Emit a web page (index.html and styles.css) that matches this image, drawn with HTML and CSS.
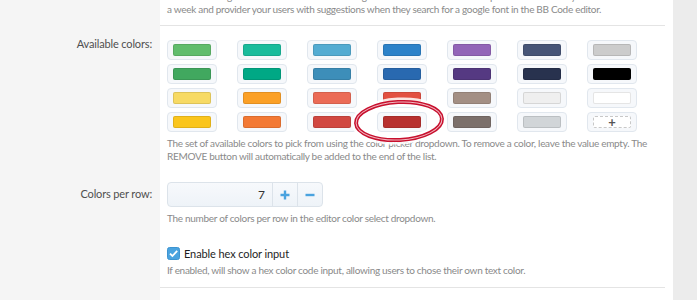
FILE: index.html
```html
<!DOCTYPE html>
<html lang="en">
<head>
    <meta charset="UTF-8">
    <title>Options</title>
    <link rel="stylesheet" href="styles.css">
</head>
<body>
    <div class="page">
        <div class="row row-top">
            <div class="row-label"></div>
            <div class="row-body">
                <p class="hint">The list of Google fonts is fetched from the Google Fonts API and cached. It is updated automatically once</p>
                <p class="hint">a week and provider your users with suggestions when they search for a google font in the BB Code editor.</p>
            </div>
        </div>

        <div class="row sep-row">
            <div class="row-label"></div>
            <div class="row-body"><div class="sep"></div></div>
        </div>

        <div class="row row-colors">
            <div class="row-label">Available colors:</div>
            <div class="row-body">
                <div class="colors-wrap">
                    <div class="swatch-grid" id="swatches"></div>
                    <svg class="marker" width="110" height="56" viewBox="0 0 110 56">
                        <ellipse cx="55" cy="28" rx="43" ry="19" fill="none" stroke="#fff" stroke-width="9" opacity="0.85" transform="rotate(-3 55 28)"/>
                        <ellipse cx="55" cy="28" rx="43" ry="19" fill="none" stroke="#c8102e" stroke-width="4" transform="rotate(-3 55 28)"/>
                        <ellipse cx="55" cy="28" rx="43" ry="19" fill="none" stroke="#f0b8c0" stroke-width="1" transform="rotate(-3 55 28)"/>
                    </svg>
                </div>
                <p class="hint hint-below">The set of available colors to pick from using the color picker dropdown. To remove a color, leave the value empty. The REMOVE button will automatically be added to the end of the list.</p>
            </div>
        </div>

        <div class="row row-spin">
            <div class="row-label">Colors per row:</div>
            <div class="row-body">
                <div class="spin">
                    <div class="spin-value">7</div>
                    <div class="spin-btn">
                        <svg width="10" height="10" viewBox="0 0 10 10"><path d="M5 0.5v9M0.5 5h9" stroke="#4aa3df" stroke-width="2.4"/></svg>
                    </div>
                    <div class="spin-btn">
                        <svg width="10" height="10" viewBox="0 0 10 10"><path d="M0.5 5h9" stroke="#4aa3df" stroke-width="2.4"/></svg>
                    </div>
                </div>
                <p class="hint hint-below">The number of colors per row in the editor color select dropdown.</p>
            </div>
        </div>

        <div class="row row-check">
            <div class="row-label"></div>
            <div class="row-body">
                <label class="check">
                    <svg width="13" height="13" viewBox="0 0 13 13">
                        <rect x="0.5" y="0.5" width="12" height="12" rx="2" fill="#4aa3df" stroke="#3d94d1"/>
                        <path d="M3 6.6l2.4 2.4L10.2 3.8" fill="none" stroke="#fff" stroke-width="1.8"/>
                    </svg>
                    <span>Enable hex color input</span>
                </label>
                <p class="hint hint-check">If enabled, will show a hex color code input, allowing users to chose their own text color.</p>
            </div>
        </div>

        <div class="row sep-row">
            <div class="row-label"></div>
            <div class="row-body"><div class="sep"></div></div>
        </div>

        <div class="row row-rest">
            <div class="row-label"></div>
            <div class="row-body"></div>
        </div>
    </div>

    <script>
        const colors = [
            '#61bd6d', '#1abc9c', '#54acd2', '#2c82c9', '#9365b8', '#475577', '#cccccc',
            '#41a85f', '#00a885', '#3d8eb9', '#2969b0', '#553982', '#28324e', '#000000',
            '#f7da64', '#fba026', '#eb6b56', '#e25041', '#a38f84', '#efefef', '#ffffff',
            '#fac51c', '#f37934', '#d14841', '#b8312f', '#7c706b', '#d1d5d8', null
        ];

        const grid = document.getElementById('swatches');
        colors.forEach(color => {
            const swatch = document.createElement('div');
            swatch.className = 'swatch';
            const inner = document.createElement('span');
            if (color) {
                inner.style.background = color;
            } else {
                inner.className = 'add';
                inner.textContent = '+';
            }
            swatch.appendChild(inner);
            grid.appendChild(swatch);
        });
    </script>
</body>
</html>
```

FILE: styles.css
```css
body {
    margin: 0;
    background-color: #ececec;
    font-family: Lato, "Open Sans", sans-serif;
    overflow: hidden;
}

.page {
    width: 673px;
    margin-top: -10px;
}

.row {
    display: grid;
    grid-template-columns: 160px 1fr;
}

.row-label {
    background-color: #f5f5f5;
    text-align: right;
    padding-right: 8px;
    font-size: 11px;
    line-height: 14px;
    letter-spacing: -0.15px;
    color: #4f4f4f;
}

.row-body {
    background-color: #fff;
    padding: 0 8px 0 7px;
}

.hint {
    margin: 0;
    font-size: 10px;
    line-height: 13px;
    letter-spacing: -0.3px;
    color: #8a8a8a;
    white-space: nowrap;
}

.hint-below,
.hint-check {
    white-space: normal;
}

.row-top .row-body {
    padding-bottom: 9px;
}

.sep-row .row-body {
    padding-left: 0;
}

.sep {
    height: 1px;
    background-color: #e4e4e4;
}

.row-colors .row-label {
    padding-top: 11px;
}

.row-colors .row-body {
    padding-top: 14px;
}

.colors-wrap {
    position: relative;
}

.swatch-grid {
    display: grid;
    grid-template-columns: repeat(7, 50px);
    column-gap: 20px;
    row-gap: 4px;
}

.swatch {
    box-sizing: border-box;
    width: 50px;
    height: 20px;
    padding: 3px 5px;
    border: 1px solid #e1e7ee;
    border-radius: 4px;
    background-color: #f6f8fb;
}

.swatch span {
    display: block;
    box-sizing: border-box;
    height: 100%;
    border: 1px solid rgba(0, 0, 0, 0.1);
    border-radius: 2px;
}

.swatch span.add {
    border: 1px dashed #c8c8c8;
    background-color: #fff;
    text-align: center;
    font-size: 13px;
    line-height: 11px;
    font-weight: bold;
    color: #555;
}

.marker {
    position: absolute;
    left: 177px;
    top: 53px;
}

.hint-below {
    margin-top: 5px;
}

.row-spin .row-label {
    padding-top: 24px;
}

.row-spin .row-body {
    padding-top: 19px;
}

.spin {
    display: flex;
    box-sizing: border-box;
    width: 156px;
    height: 25px;
    border: 1px solid #dce3ea;
    border-radius: 4px;
    background: linear-gradient(#f7f9fc, #eef3f8);
}

.spin-value {
    flex: 1;
    text-align: right;
    padding-right: 7px;
    font-size: 12px;
    line-height: 23px;
    color: #333;
}

.spin-btn {
    width: 24px;
    border-left: 1px solid #dce3ea;
    display: flex;
    align-items: center;
    justify-content: center;
}

.row-check .row-body {
    padding-top: 20px;
    padding-bottom: 10px;
}

.check {
    display: flex;
    align-items: center;
    gap: 4px;
    font-size: 11px;
    line-height: 17px;
    letter-spacing: -0.1px;
    color: #1e1e1e;
}

.hint-check {
    margin-top: 2px;
}

.row-rest .row-body {
    height: 40px;
}
```
